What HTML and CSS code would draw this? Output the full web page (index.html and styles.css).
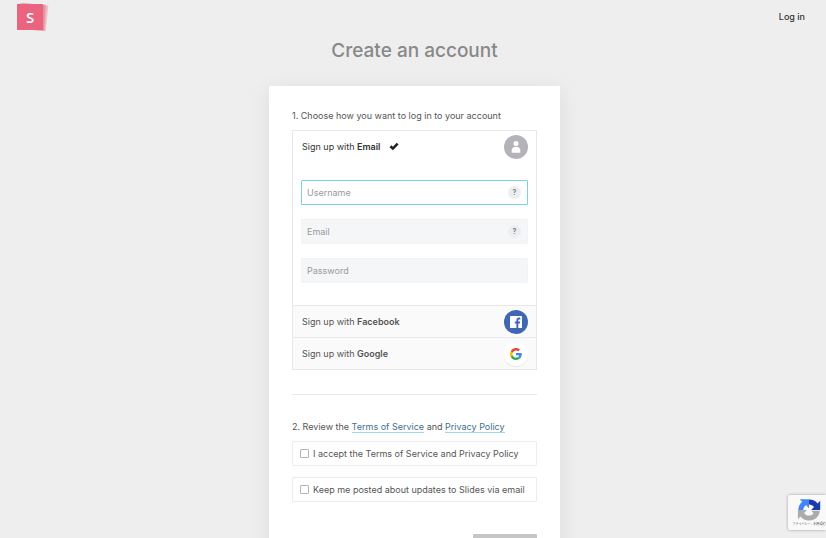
FILE: index.html
```html
<!DOCTYPE html>
<html lang="en">
<head>
    <meta charset="UTF-8">
    <meta name="viewport" content="width=device-width, initial-scale=1.0">
    <title>Create an account - Slides</title>
    <link rel="stylesheet" href="styles.css">
</head>
<body>
    <header class="site-header">
        <a class="logo" href="#" aria-label="Slides">
            <span class="logo-letter">S</span>
        </a>
        <a class="login-link" href="#">Log in</a>
    </header>

    <main class="page">
        <h1>Create an account</h1>

        <form class="card">
            <p class="step">1. Choose how you want to log in to your account</p>

            <div class="providers">
                <div class="provider active">
                    <button type="button" class="provider-button">
                        <span>Sign up with <b>Email</b></span>
                        <svg class="check" viewBox="0 0 16 14" aria-hidden="true">
                            <path d="M0.8 8 L3.8 4.9 L6.2 7.2 L12.4 0.8 L15.3 3.6 L6.3 12.8 Z" fill="#222"/>
                        </svg>
                        <svg class="provider-icon" viewBox="0 0 24 24" aria-hidden="true">
                            <circle cx="12" cy="12" r="12" fill="#b5b3b9"/>
                            <circle cx="12" cy="8.4" r="2.5" fill="#fff"/>
                            <path d="M7.7 17.8 V15.8 C7.7 13.2 9.4 11.8 12 11.8 C14.6 11.8 16.3 13.2 16.3 15.8 V17.8 Z" fill="#fff"/>
                        </svg>
                    </button>
                    <div class="fields">
                        <div class="field">
                            <input type="text" class="focused" placeholder="Username" aria-label="Username">
                            <button type="button" class="help" aria-label="About usernames">?</button>
                        </div>
                        <div class="field">
                            <input type="email" placeholder="Email" aria-label="Email">
                            <button type="button" class="help" aria-label="About email">?</button>
                        </div>
                        <div class="field">
                            <input type="password" placeholder="Password" aria-label="Password">
                        </div>
                    </div>
                </div>
                <div class="provider">
                    <button type="button" class="provider-button">
                        <span>Sign up with <b>Facebook</b></span>
                        <svg class="provider-icon" viewBox="0 0 24 24" aria-hidden="true">
                            <circle cx="12" cy="12" r="12" fill="#4267b2"/>
                            <rect x="6" y="6" width="12" height="12" rx="0.6" fill="#fff"/>
                            <path d="M12.4 18 V13.4 H10.8 V11.6 H12.4 V10.2 C12.4 8.5 13.4 7.6 14.9 7.6 C15.6 7.6 16.1 7.7 16.3 7.7 V9.4 H15.3 C14.5 9.4 14.3 9.8 14.3 10.4 V11.6 H16.2 L15.9 13.4 H14.3 V18 Z" fill="#4267b2"/>
                        </svg>
                    </button>
                </div>
                <div class="provider">
                    <button type="button" class="provider-button">
                        <span>Sign up with <b>Google</b></span>
                        <svg class="provider-icon google" viewBox="0 0 24 24" aria-hidden="true">
                            <circle cx="12" cy="12" r="12" fill="#fff"/>
                            <g transform="translate(6 6) scale(0.25)">
                                <path fill="#ea4335" d="M24 9.5c3.54 0 6.71 1.22 9.21 3.6l6.85-6.85C35.9 2.38 30.47 0 24 0 14.62 0 6.51 5.38 2.56 13.22l7.98 6.19C12.43 13.72 17.74 9.5 24 9.5z"/>
                                <path fill="#4285f4" d="M46.98 24.55c0-1.57-.15-3.09-.38-4.55H24v9.02h12.94c-.58 2.96-2.26 5.48-4.78 7.18l7.73 6c4.51-4.18 7.09-10.36 7.09-17.65z"/>
                                <path fill="#fbbc05" d="M10.53 28.59c-.48-1.45-.76-2.99-.76-4.59s.27-3.14.76-4.59l-7.98-6.19C.92 16.46 0 20.12 0 24c0 3.88.92 7.54 2.56 10.78l7.97-6.19z"/>
                                <path fill="#34a853" d="M24 48c6.48 0 11.93-2.13 15.89-5.81l-7.73-6c-2.15 1.45-4.92 2.3-8.16 2.3-6.26 0-11.57-4.22-13.47-9.91l-7.98 6.19C6.51 42.62 14.62 48 24 48z"/>
                            </g>
                        </svg>
                    </button>
                </div>
            </div>

            <hr>

            <p class="step">2. Review the <a href="#">Terms of Service</a> and <a href="#">Privacy Policy</a></p>

            <label class="option">
                <input type="checkbox">
                I accept the Terms of Service and Privacy Policy
            </label>
            <label class="option">
                <input type="checkbox">
                Keep me posted about updates to Slides via email
            </label>

            <button type="submit" class="submit" aria-label="Create account"></button>
        </form>
    </main>

    <aside class="recaptcha">
        <svg viewBox="0 0 24 24" aria-hidden="true">
            <path d="M12 1.5 C16 1.5 18.8 3.2 20.6 5.4 L23.2 2.8 V12 H14.2 L17 9 C15.9 7.4 14.3 6.4 12 6.4 Z" fill="#1c3aa9"/>
            <path d="M1.3 12 C1.3 8.3 3 5.4 5.2 3.7 L2.8 1.2 H12 V10.2 L9.2 7.2 C7.4 8.2 6.3 9.8 6.3 12 Z" fill="#4285f4"/>
            <path d="M12 22.6 C8.2 22.6 5.4 21 3.5 18.6 L0.9 21.2 V12 H10 L7.1 15 C8.1 16.6 9.7 17.6 12 17.6 C14.1 17.6 15.7 16.9 16.6 15.2 L14.2 12.8 H22.8 C22.4 18.5 18.2 22.6 12 22.6 Z" fill="#ababab"/>
        </svg>
        <span class="recaptcha-links"><a href="#">プライバシー</a> - <a href="#">利用規約</a></span>
    </aside>
</body>
</html>
```

FILE: styles.css
```css
:root {
    --bg: #eee;
    --text: #555;
    --line: #e8e8e8;
    --field: #f4f6f8;
    --blue: #7cd0ee;
}

* {
    box-sizing: border-box;
}

html {
    scrollbar-width: none;
}

body {
    margin: 0;
    background-color: var(--bg);
    color: var(--text);
    font-family: Inter, "Noto Sans CJK JP", sans-serif;
    font-size: 9px;
    line-height: 12px;
}

button,
input {
    font: inherit;
    color: inherit;
}

.site-header {
    display: flex;
    justify-content: space-between;
    align-items: center;
    height: 34px;
    padding: 0 21px 0 17px;
}

/* Stack of three slides, the front one carries the letter */
.logo {
    position: relative;
    width: 26px;
    height: 26px;
    color: #fff;
    text-decoration: none;
}

.logo::before,
.logo::after {
    content: "";
    position: absolute;
    inset: 0;
    background-color: #e4637c;
    opacity: 0.35;
    transform: translateX(4px) rotate(6deg);
}

.logo::after {
    opacity: 0.5;
    transform: translateX(2px) rotate(3deg);
}

.logo-letter {
    position: relative;
    z-index: 1;
    display: block;
    height: 100%;
    background-color: #e8647f;
    font: 600 15px/26px "Open Sans", sans-serif;
    text-align: center;
}

.login-link {
    color: #333;
    font-weight: 500;
    text-decoration: none;
}

.page {
    padding-left: 3px;
}

h1 {
    margin: 4px 0 23px;
    color: #888;
    font-size: 19px;
    font-weight: 500;
    line-height: 25px;
    text-align: center;
}

.card {
    display: flex;
    flex-direction: column;
    max-width: 291px;
    margin: 0 auto;
    padding: 24px 23px;
    background-color: #fff;
    box-shadow: 0 4px 20px rgba(0, 0, 0, 0.08);
}

.step {
    margin: 0 0 8px;
}

.step a {
    color: #44708a;
    border-bottom: 1px solid #a9d3e6;
    text-decoration: none;
}

.providers {
    border: 1px solid var(--line);
}

.provider {
    background-color: #fafafa;
}

.provider + .provider {
    border-top: 1px solid var(--line);
}

.provider.active {
    background-color: #fff;
    color: #333;
}

.provider-button {
    display: flex;
    align-items: center;
    width: 100%;
    height: 31px;
    padding: 0 8px 0 9px;
    border: none;
    background: none;
    cursor: pointer;
}

.provider-button b {
    font-weight: 600;
}

.check {
    width: 10px;
    height: 9px;
    margin-left: 9px;
}

.provider-icon {
    width: 24px;
    height: 24px;
    margin-left: auto;
}

.provider-icon.google {
    border-radius: 50%;
    box-shadow: 0 1px 1px rgba(0, 0, 0, 0.08);
}

.fields {
    display: grid;
    gap: 14px;
    padding: 18px 8px 22px;
}

.field {
    position: relative;
}

.field input {
    display: block;
    width: 100%;
    height: 25px;
    padding: 0 24px 0 5px;
    border: 1px solid #f1f3f4;
    border-radius: 1px;
    outline: none;
    background-color: var(--field);
}

.field input::placeholder {
    color: #9a9a9a;
    opacity: 1;
}

.field input:focus,
.field input.focused {
    border-color: var(--blue);
    background-color: #fff;
}

.help {
    position: absolute;
    top: 6px;
    right: 7px;
    width: 13px;
    height: 13px;
    padding: 0;
    border: none;
    border-radius: 50%;
    background-color: #eceef1;
    color: #777;
    font-size: 7px;
    font-weight: 600;
    line-height: 13px;
}

hr {
    width: 100%;
    margin: 24px 0 26px;
    border: none;
    border-top: 1px solid var(--line);
}

.option {
    display: flex;
    align-items: center;
    gap: 4px;
    height: 25px;
    margin-bottom: 11px;
    padding: 0 7px;
    border: 1px solid #ececec;
    border-radius: 1px;
}

.option input {
    appearance: none;
    width: 9px;
    height: 9px;
    margin: 0;
    border: 1px solid #b4b4b4;
    border-radius: 1px;
    background-color: #fff;
}

.submit {
    align-self: flex-end;
    width: 64px;
    height: 25px;
    margin-top: 21px;
    border: none;
    border-radius: 1px;
    background-color: #c6c6c6;
}

.recaptcha {
    position: fixed;
    right: 0;
    bottom: 8px;
    display: flex;
    flex-direction: column;
    align-items: center;
    width: 38px;
    height: 35px;
    padding: 3px 0 0 4px;
    border-radius: 2px 0 0 2px;
    background-color: #f9f9f9;
    box-shadow: 0 0 3px #999;
}

.recaptcha svg {
    width: 24px;
    height: 24px;
}

.recaptcha-links {
    color: #555;
    font-size: 3px;
    line-height: 4px;
    white-space: nowrap;
}

.recaptcha-links a {
    color: inherit;
    text-decoration: none;
}
```
